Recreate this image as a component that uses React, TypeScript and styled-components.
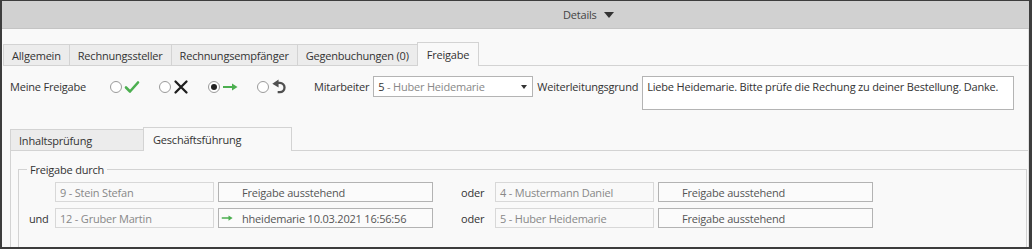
import React from "react";
import styled, { createGlobalStyle } from "styled-components";

const GlobalStyle = createGlobalStyle`
  html, body {
    margin: 0;
    padding: 0;
    background: #f9f9f9;
  }
  * {
    box-sizing: border-box;
  }
  body {
    font-family: "Open Sans", "Noto Sans", Arial, sans-serif;
    font-size: 11px;
    letter-spacing: -0.2px;
    color: #333;
  }
`;

const Frame = styled.div`
  width: 1032px;
  height: 249px;
  overflow: hidden;
  background: #f9f9f9;
  border-style: solid;
  border-color: #3d3d3d;
  border-width: 1px 3px 2px 2px;
  display: flex;
  flex-direction: column;
`;

const TopBar = styled.div`
  height: 28px;
  flex: none;
  background: #d1d1d1;
  border-bottom: 1px solid #c4c4c4;
  display: flex;
  align-items: center;
  padding-left: 561px;
  gap: 7px;
  color: #444;
`;

const Caret = styled.span`
  width: 0;
  height: 0;
  border-left: 5px solid transparent;
  border-right: 5px solid transparent;
  border-top: 6px solid #333;
  margin-top: 1px;
`;

const Body = styled.div`
  flex: 1;
  padding: 14px 0 0 1px;
  border-right: 1px solid #e2e2e2;
`;

const TabBar = styled.div<{ $inner?: boolean }>`
  display: flex;
  align-items: flex-end;
  height: ${(p) => (p.$inner ? "25px" : "23px")};
  border-bottom: 1px solid #d3d3d3;
`;

const Tab = styled.div<{ $active?: boolean; $w?: number }>`
  height: ${(p) => (p.$active ? "24px" : "21px")};
  margin-bottom: ${(p) => (p.$active ? "-1px" : "0")};
  width: ${(p) => (p.$w ? `${p.$w}px` : "auto")};
  padding: 0 ${(p) => (p.$active ? "9px" : "8px")};
  display: flex;
  align-items: center;
  padding-bottom: ${(p) => (p.$active ? "1px" : "0")};
  border: 1px solid #d3d3d3;
  border-bottom: none;
  margin-right: -1px;
  background: ${(p) => (p.$active ? "#f9f9f9" : "#ececec")};
  color: #333;
  white-space: nowrap;
`;

const ApprovalRow = styled.div`
  display: flex;
  align-items: flex-start;
  padding: 10px 0 0 7px;
  height: 60px;
`;

const Label = styled.span<{ $w?: number; $gap?: number }>`
  line-height: 21px;
  white-space: nowrap;
  width: ${(p) => (p.$w ? `${p.$w}px` : "auto")};
  margin-left: ${(p) => p.$gap ?? 0}px;
  flex: none;
`;

const Choices = styled.div`
  display: flex;
  gap: 19px;
  margin-left: 24px;
  height: 21px;
  align-items: center;
`;

const Choice = styled.div`
  display: flex;
  align-items: center;
  gap: 2px;
  width: 30px;
`;

const Radio = styled.span<{ $checked?: boolean }>`
  width: 12px;
  height: 12px;
  border-radius: 50%;
  border: 1px solid #9a9a9a;
  background: #fff;
  display: flex;
  align-items: center;
  justify-content: center;
  flex: none;
  &::after {
    content: "";
    width: 6px;
    height: 6px;
    border-radius: 50%;
    background: ${(p) => (p.$checked ? "#222" : "transparent")};
  }
`;

const Select = styled.div`
  width: 160px;
  height: 21px;
  margin: 0 4px;
  border: 1px solid #b4b4b4;
  background: #fff;
  display: flex;
  align-items: center;
  padding: 0 5px 0 4px;
  flex: none;
`;

const SelectText = styled.span`
  flex: 1;
  color: #888;
  white-space: nowrap;
  b {
    font-weight: normal;
    color: #333;
  }
`;

const SmallCaret = styled.span`
  width: 0;
  height: 0;
  border-left: 3px solid transparent;
  border-right: 3px solid transparent;
  border-top: 4px solid #333;
`;

const TextArea = styled.div`
  width: 372px;
  height: 34px;
  margin-left: 4px;
  border: 1px solid #b4b4b4;
  background: #fff;
  padding: 2px 4px;
  line-height: 15px;
  color: #333;
  white-space: nowrap;
`;

const Section = styled.div`
  margin-left: 7px;
`;

const InnerPanel = styled.div`
  border-left: 1px solid #d3d3d3;
  padding: 11px 1px 0 7px;
`;

const Fieldset = styled.fieldset`
  margin: 0;
  border: 1px solid #d3d3d3;
  padding: 5px 8px 20px 8px;
`;

const Legend = styled.legend`
  padding: 0 3px;
  line-height: 15px;
  color: #333;
`;

const Rows = styled.div`
  display: flex;
  flex-direction: column;
  gap: 6px;
  padding-left: 2px;
`;

const Row = styled.div`
  display: flex;
  align-items: center;
  height: 20px;
`;

const RowLabel = styled.span<{ $w: number }>`
  width: ${(p) => p.$w}px;
  flex: none;
  white-space: nowrap;
`;

const Person = styled.div<{ $w: number }>`
  width: ${(p) => p.$w}px;
  height: 20px;
  flex: none;
  border: 1px solid #d8d8d8;
  color: #888;
  padding-left: 4px;
  display: flex;
  align-items: center;
  white-space: nowrap;
`;

const Status = styled.div`
  width: 215px;
  height: 20px;
  flex: none;
  margin-left: 4px;
  border: 1px solid #b3b3b3;
  background: #fbfbfb;
  color: #555;
  display: flex;
  align-items: center;
  white-space: nowrap;
`;

const StatusIcon = styled.span`
  width: 23px;
  flex: none;
  display: flex;
  align-items: center;
  padding-left: 2px;
`;

const Or = styled.span`
  width: 62px;
  flex: none;
  padding-left: 28px;
  white-space: nowrap;
`;

const CheckIcon = () => (
  <svg width="16" height="16" viewBox="0 0 16 16">
    <path d="M2 8.5 L6 12.5 L14 3.5" fill="none" stroke="#4caf50" strokeWidth="2.6" strokeLinecap="round" strokeLinejoin="round" />
  </svg>
);

const CrossIcon = () => (
  <svg width="16" height="16" viewBox="0 0 16 16">
    <path d="M2.5 2.5 L13.5 13.5 M13.5 2.5 L2.5 13.5" fill="none" stroke="#1e1e1e" strokeWidth="2.3" strokeLinecap="round" />
  </svg>
);

const ForwardIcon = ({ w = 16 }: { w?: number }) => (
  <svg width={w} height="10" viewBox="0 0 16 10">
    <path d="M1 5 H11" stroke="#4caf50" strokeWidth="2" />
    <path d="M10 1.5 L15.5 5 L10 8.5 Z" fill="#4caf50" />
  </svg>
);

const UndoIcon = () => (
  <svg width="18" height="17" viewBox="0 0 18 17">
    <path d="M7 4.5 H10 A5.2 5.2 0 0 1 10 14.9 H7.5" fill="none" stroke="#505050" strokeWidth="2.6" strokeLinejoin="round" />
    <path d="M1.5 5.5 L8.5 0.5 L8.5 9.5 Z" fill="#505050" />
  </svg>
);

const rows = [
  { label: "", first: "9 - Stein Stefan", done: "", second: "4 - Mustermann Daniel" },
  { label: "und", first: "12 - Gruber Martin", done: "hheidemarie 10.03.2021 16:56:56", second: "5 - Huber Heidemarie" },
];

export default function App() {
  return (
    <>
      <GlobalStyle />
      <Frame>
        <TopBar>
          <span>Details</span>
          <Caret />
        </TopBar>
        <Body>
          <TabBar>
            <Tab>Allgemein</Tab>
            <Tab>Rechnungssteller</Tab>
            <Tab>Rechnungsempfänger</Tab>
            <Tab>Gegenbuchungen (0)</Tab>
            <Tab $active>Freigabe</Tab>
          </TabBar>

          <ApprovalRow>
            <Label $w={76}>Meine Freigabe</Label>
            <Choices>
              <Choice><Radio /><CheckIcon /></Choice>
              <Choice><Radio /><CrossIcon /></Choice>
              <Choice><Radio $checked /><ForwardIcon /></Choice>
              <Choice><Radio /><UndoIcon /></Choice>
            </Choices>
            <Label $gap={27}>Mitarbeiter</Label>
            <Select>
              <SelectText><b>5</b> - Huber Heidemarie</SelectText>
              <SmallCaret />
            </Select>
            <Label>Weiterleitungsgrund</Label>
            <TextArea>Liebe Heidemarie. Bitte prüfe die Rechung zu deiner Bestellung. Danke.</TextArea>
          </ApprovalRow>

          <Section>
            <TabBar $inner>
              <Tab $w={134}>Inhaltsprüfung</Tab>
              <Tab $active $w={149}>Geschäftsführung</Tab>
            </TabBar>
            <InnerPanel>
              <Fieldset>
                <Legend>Freigabe durch</Legend>
                <Rows>
                  {rows.map((r, i) => (
                    <Row key={i}>
                      <RowLabel $w={26}>{r.label}</RowLabel>
                      <Person $w={159}>{r.first}</Person>
                      <Status>
                        <StatusIcon>{r.done && <ForwardIcon w={12} />}</StatusIcon>
                        {r.done || "Freigabe ausstehend"}
                      </Status>
                      <Or>oder</Or>
                      <Person $w={159}>{r.second}</Person>
                      <Status>
                        <StatusIcon />
                        Freigabe ausstehend
                      </Status>
                    </Row>
                  ))}
                </Rows>
              </Fieldset>
            </InnerPanel>
          </Section>
        </Body>
      </Frame>
    </>
  );
}
